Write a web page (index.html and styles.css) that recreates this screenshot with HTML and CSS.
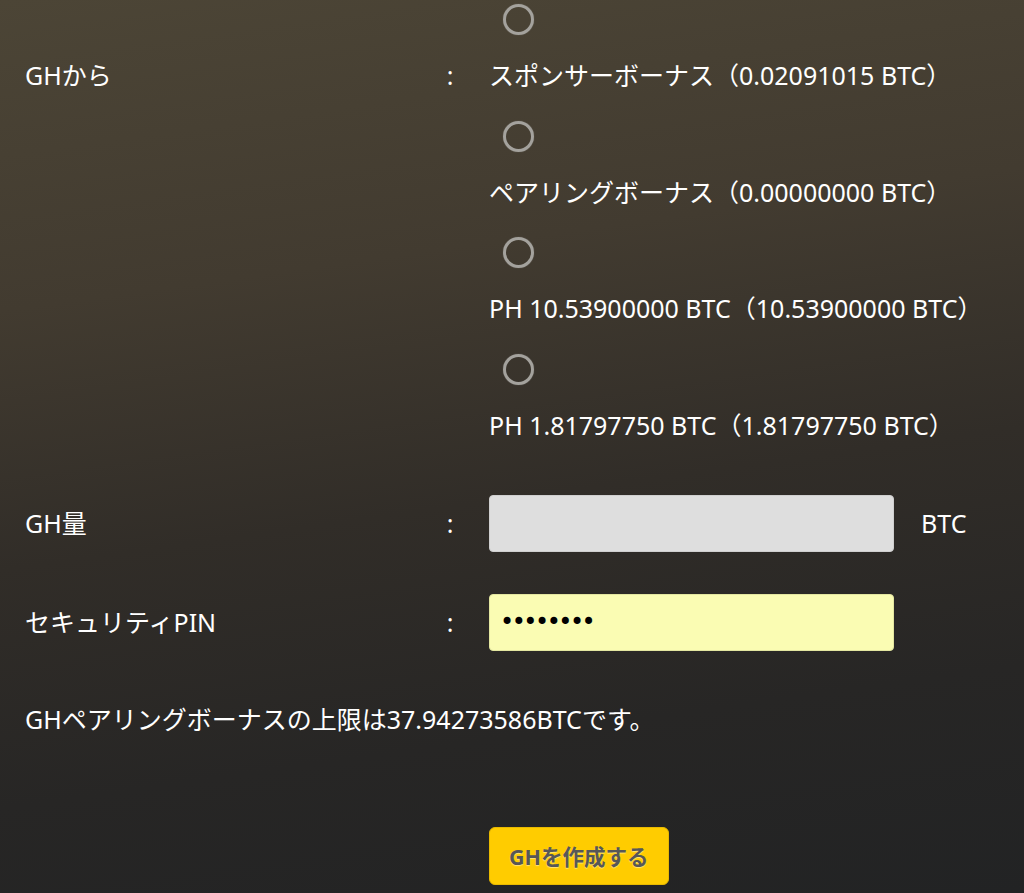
FILE: index.html
```html
<!DOCTYPE html>
<html lang="ja">
<head>
<meta charset="utf-8">
<title>GH作成</title>
<link rel="stylesheet" href="styles.css">
</head>
<body>
<div class="page">
  <form class="form">
    <div class="row row-top">
      <div class="label label-top">GHから</div>
      <div class="colon colon-top">:</div>
      <div class="value options">
        <label class="option"><span class="radio"></span><span class="opt-text">スポンサーボーナス（0.02091015 BTC）</span></label>
        <label class="option"><span class="radio"></span><span class="opt-text">ペアリングボーナス（0.00000000 BTC）</span></label>
        <label class="option"><span class="radio"></span><span class="opt-text">PH 10.53900000 BTC（10.53900000 BTC）</span></label>
        <label class="option"><span class="radio"></span><span class="opt-text">PH 1.81797750 BTC（1.81797750 BTC）</span></label>
      </div>
    </div>
    <div class="row row-input row-amount">
      <div class="label">GH量</div>
      <div class="colon">:</div>
      <div class="value value-input">
        <input class="field field-amount" type="text" value="">
        <span class="unit">BTC</span>
      </div>
    </div>
    <div class="row row-input row-pin">
      <div class="label">セキュリティPIN</div>
      <div class="colon">:</div>
      <div class="value value-input">
        <input class="field field-pin" type="password" value="12345678">
      </div>
    </div>
    <p class="note">GHペアリングボーナスの上限は37.94273586BTCです。</p>
    <div class="actions">
      <button class="submit" type="button">GHを作成する</button>
    </div>
  </form>
</div>
</body>
</html>
```

FILE: styles.css
```css
html, body {
  margin: 0;
  padding: 0;
}
body {
  width: 1024px;
  height: 893px;
  overflow: hidden;
  background: linear-gradient(172deg, #4c4536 0%, #423b30 30%, #312d28 55%, #272625 78%, #222324 100%);
  color: #ffffff;
  font-family: "Noto Sans", "Noto Sans CJK JP", sans-serif;
  font-size: 25px;
}
.page {
  padding: 0 0 0 25px;
}
.form {
  display: flex;
  flex-direction: column;
}
.row {
  display: flex;
  align-items: flex-start;
}
.label {
  width: 415px;
  line-height: 32px;
}
.colon {
  width: 20px;
  text-align: center;
  line-height: 32px;
}
.value {
  margin-left: 29px;
}
.label-top, .colon-top {
  margin-top: 59px;
}
.options {
  display: flex;
  flex-direction: column;
}
.option {
  display: flex;
  flex-direction: column;
  align-items: flex-start;
  padding: 4px 0 25.7px;
}
.radio {
  width: 25px;
  height: 25px;
  border: 3px solid #a4a29d;
  border-radius: 50%;
  margin-left: 14px;
  margin-bottom: 24px;
  box-shadow: 0 0 1px rgba(200,200,200,0.5);
}
.opt-text {
  line-height: 32px;
  white-space: nowrap;
}
.row-input {
  align-items: center;
}
.row-amount {
  margin-top: 28px;
}
.row-pin {
  margin-top: 42px;
}
.value-input {
  display: flex;
  align-items: center;
}
.field {
  width: 405px;
  height: 57px;
  box-sizing: border-box;
  border: 1px solid #cfcfcf;
  border-radius: 4px;
  padding: 0 10px;
  font-family: "DejaVu Sans", sans-serif;
  font-size: 24px;
  color: #000;
  outline: none;
}
.field-amount {
  background: #dedede;
}
.field-pin {
  background: #fafcb3;
  border-color: #e3e6a0;
  letter-spacing: -2.5px;
}
.unit {
  margin-left: 27px;
  line-height: 32px;
}
.note {
  margin: 52px 0 0;
  line-height: 32px;
}
.actions {
  margin-top: 92px;
  padding-left: 464px;
}
.submit {
  height: 58px;
  padding: 0 19px;
  background: #ffcc00;
  border: 1px solid #e8b900;
  border-radius: 6px;
  color: #575757;
  font-family: "Noto Sans", "Noto Sans CJK JP", sans-serif;
  font-weight: 700;
  font-size: 21.5px;
  text-shadow: 0 1px 1px rgba(255,240,170,0.7);
}
```
